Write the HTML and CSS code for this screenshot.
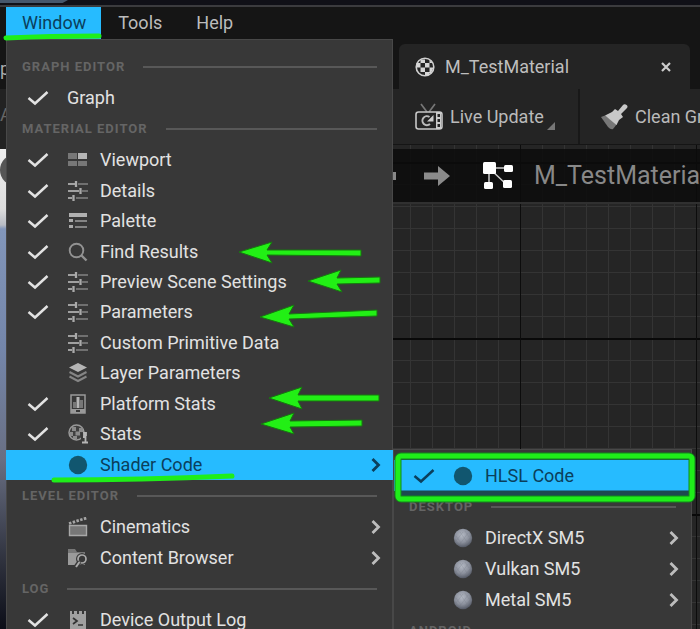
FILE: index.html
```
<!DOCTYPE html>
<html lang="en">
<head>
<meta charset="utf-8">
<title>Material Editor</title>
<link rel="stylesheet" href="styles.css">
</head>
<body>
<svg class="defs" aria-hidden="true">
  <defs>
    <radialGradient id="ball" cx="45%" cy="35%" r="65%">
      <stop offset="0" stop-color="#b4b9c4"/><stop offset=".6" stop-color="#8b909c"/><stop offset="1" stop-color="#555a66"/>
    </radialGradient>
    <symbol id="check" viewBox="0 0 22 16"><path d="M1.500 8L8 13.500L20.500 2" fill="none" stroke="currentColor" stroke-width="2.500"/></symbol>
    <symbol id="chevron" viewBox="0 0 12 16"><path d="M2.500 2L8.500 8L2.500 14" fill="none" stroke="currentColor" stroke-width="2.800"/></symbol>
    <symbol id="viewport" viewBox="0 0 20 20"><path d="M0 3h9v6H0zM0 11h9v5H0zM10 11h9v5h-9z" fill="#777"/><path d="M10 3h9v6h-9z" fill="#b5b5b5"/></symbol>
    <symbol id="sliders" viewBox="0 0 20 20"><path d="M0 3h7M0 10h11M0 17h4" stroke="#a0a0a0" stroke-width="2"/><path d="M10 3h10M14 10h6M8 17h12" stroke="#707070" stroke-width="2"/><path d="M8 0v6M12.500 7v6M5.500 14v6" stroke="#aaa" stroke-width="2.300"/></symbol>
    <symbol id="palette" viewBox="0 0 20 20"><path d="M1 2h18v4H1z" fill="#b0b0b0"/><path d="M1 8h4v3H1zM1 14h4v3H1z" fill="#aaa"/><path d="M7 9h12v2H7zM7 15h12v2H7z" fill="#858585"/></symbol>
    <symbol id="search" viewBox="0 0 20 20"><circle cx="8.500" cy="8.500" r="6.800" fill="none" stroke="#929292" stroke-width="1.900"/><path d="M13 13l5.500 5.500" stroke="#929292" stroke-width="2.400"/></symbol>
    <symbol id="layers" viewBox="0 0 20 20"><path d="M10 0l9 4.500-9 4.500-9-4.500z" fill="#b5b5b5"/><path d="M1.500 9l8.500 4.500 8.500-4.500M1.500 13.500L10 18l8.500-4.500" fill="none" stroke="#858585" stroke-width="2"/></symbol>
    <symbol id="platform" viewBox="0 0 20 20"><path d="M3 1h14v18H3z" fill="none" stroke="#999" stroke-width="1.500"/><path d="M3 15h14v4H3z" fill="#999"/><path d="M5 8h3v6H5zM12 6h3v8h-3z" fill="#777"/><path d="M8.500 3h3v11h-3z" fill="#b5b5b5"/><path d="M8 16h4v2H8z" fill="#383838"/></symbol>
    <symbol id="stats" viewBox="0 0 20 20"><circle cx="8.500" cy="8.500" r="7.500" fill="#404040" stroke="#999" stroke-width="1.500"/><path d="M4 3h4v4H4zM11 4h4v4h-4zM7.500 7.500H12v4H7.500zM2 8h3v4H2zM5 12h4v3H5z" fill="#8b8b8b"/><path d="M13 9h7v11h-7z" fill="#383838"/><path d="M16 9h2v2h-2zM15 13h2.500v5.500M14 18.500h6" fill="none" stroke="#b5b5b5" stroke-width="1.800"/></symbol>
    <symbol id="dot" viewBox="0 0 20 20"><circle cx="10" cy="10" r="9.200" fill="#11566f"/></symbol>
    <symbol id="sphere" viewBox="0 0 20 20"><circle cx="10" cy="10" r="9.200" fill="url(#ball)"/><path d="M3 8l5 7M7 4l7 10M12 3l4 6M3 13l7-9M7 16l8-11M12 16l5-6" stroke="#737883" stroke-width=".5" opacity=".5"/></symbol>
    <symbol id="clapper" viewBox="0 0 20 20"><path d="M1.500 8.500h17v10h-17z" fill="#777" stroke="#a8a8a8" stroke-width="1.400"/><path d="M1 6.500L18.500 1" stroke="#a5a5a5" stroke-width="2.800" stroke-dasharray="2.500 1.400"/></symbol>
    <symbol id="folder" viewBox="0 0 20 20"><path d="M0 1h7l2 3h8v3H0z" fill="#777"/><path d="M0 5h17v12H0z" fill="#9b9b9b"/><circle cx="14" cy="11" r="6" fill="#383838"/><circle cx="14" cy="11" r="4" fill="none" stroke="#aaa" stroke-width="1.700"/><path d="M11.500 13.500L7.500 19" stroke="#383838" stroke-width="4"/><path d="M11.500 14L8 19" stroke="#aaa" stroke-width="2"/></symbol>
    <symbol id="log" viewBox="0 0 20 20"><path d="M2 1h2v3h2V1h3v3h2V1h3v3h2V1h2v19H2z" fill="#a0a0a0"/><path d="M5 8l4 3-4 3M10 15h5" fill="none" stroke="#333" stroke-width="1.700"/></symbol>
  </defs>
</svg>

<div class="app">
  <div class="titlebar"><span class="titlebar-tab"></span></div>
  <nav class="menubar">
    <button class="menubar-item is-open" aria-expanded="true">Window</button>
    <button class="menubar-item">Tools</button>
    <button class="menubar-item">Help</button>
  </nav>

  <main class="workspace">
    <section class="preview">
      <div class="preview-tab">p</div>
      <div class="preview-tools">A</div>
      <div class="preview-view"><span class="preview-button"></span></div>
    </section>

    <section class="editor">
      <div class="tabs">
        <div class="tab">
          <svg class="tab-icon" viewBox="0 0 20 20"><circle cx="10" cy="10" r="8.800" fill="#252525" stroke="#d0d0d0" stroke-width="1.600"/><path d="M5.500 2.500H10V6H5.500zM10 6h4.500v4.500H10zM5.500 6v4.500H1.500V6zM5.500 10.500H10V15H5.500zM14.500 10.500h4L16 16h-1.500zM10 15h4.500v3H10zM14.500 3l3 3h-3z" fill="#d6d6d6"/></svg>
          <span>M_TestMaterial</span>
          <button class="tab-close" aria-label="Close tab"><svg viewBox="0 0 10 10"><path d="M1 1l8 8M9 1L1 9" stroke="currentColor" stroke-width="2.200"/></svg></button>
        </div>
      </div>
      <div class="toolbar">
        <button class="tool tool-live">
          <svg class="tool-icon" viewBox="0 0 28 28"><path d="M6 1l6 8M20 1l-6 8" stroke="#777" stroke-width="1.700"/><rect x="1" y="9" width="26" height="17" rx="2.500" fill="none" stroke="#c8c8c8" stroke-width="1.600"/><path d="M21 9h5v17h-5z" fill="#ccc"/><path d="M22.500 11h2.500v3h-2.500zM22.500 16h2.500v3h-2.500zM22.500 21h2.500v3h-2.500z" fill="#252525"/><path d="M14.500 14a4.500 4.500 0 1 0 .5 7" fill="none" stroke="#bbb" stroke-width="2"/><path d="M18.500 12v6.500H12z" fill="#ccc"/></svg>
          <span>Live Update</span>
          <svg class="tool-corner" viewBox="0 0 8 8"><path d="M8 0v8H0z" fill="#777"/></svg>
        </button>
        <button class="tool tool-clean">
          <svg class="tool-icon" viewBox="0 0 28 28"><path d="M1 14L5 12.500L17 21L13 26Q11 27 8 24Z" fill="#777"/><path d="M5 12.500L12 9l3-3 3 2 5-6c2-2 6 1 4 3l-6 6 2 3-4 3-2.500 5z" fill="#c8c8c8"/></svg>
          <span>Clean Graph</span>
        </button>
      </div>
      <div class="canvas">
        <div class="crumbs">
          <svg class="crumb-back" viewBox="0 0 3 8"><path d="M0 0h3v8H0z" fill="#888"/></svg>
          <svg class="crumb-next" viewBox="0 0 26 22"><path d="M0 7.500h14V1l12 10-12 10v-6.500H0z" fill="#8b8b8b"/></svg>
          <span class="crumb-rule"></span>
          <svg class="crumb-graph" viewBox="0 0 32 28"><path d="M7 6h20M7 6v18M7 6l18 17" stroke="#ccc" stroke-width="1.500"/><g fill="#fff"><rect x="1" width="13" height="12" rx="1.500"/><rect x="22" y="3" width="9" height="7" rx="1.500"/><rect x="2" y="20" width="9" height="7" rx="1.500"/><rect x="21" y="18" width="9" height="8" rx="1.500"/></g></svg>
          <span class="crumb-name">M_TestMaterial</span>
        </div>
      </div>
    </section>
  </main>

  <div class="menu menu-window" role="menu">
    <h2 class="group">Graph Editor</h2>
    <div class="items items-plain">
      <button class="item" role="menuitem"><svg class="check"><use href="#check"/></svg><span class="label">Graph</span></button>
    </div>
    <h2 class="group">Material Editor</h2>
    <div class="items items-material">
      <button class="item" role="menuitem"><svg class="check"><use href="#check"/></svg><svg class="icon"><use href="#viewport"/></svg><span class="label">Viewport</span></button>
      <button class="item" role="menuitem"><svg class="check"><use href="#check"/></svg><svg class="icon"><use href="#sliders"/></svg><span class="label">Details</span></button>
      <button class="item" role="menuitem"><svg class="check"><use href="#check"/></svg><svg class="icon"><use href="#palette"/></svg><span class="label">Palette</span></button>
      <button class="item" role="menuitem"><svg class="check"><use href="#check"/></svg><svg class="icon"><use href="#search"/></svg><span class="label">Find Results</span></button>
      <button class="item" role="menuitem"><svg class="check"><use href="#check"/></svg><svg class="icon"><use href="#sliders"/></svg><span class="label">Preview Scene Settings</span></button>
      <button class="item" role="menuitem"><svg class="check"><use href="#check"/></svg><svg class="icon"><use href="#sliders"/></svg><span class="label">Parameters</span></button>
      <button class="item" role="menuitem"><span class="check"></span><svg class="icon"><use href="#sliders"/></svg><span class="label">Custom Primitive Data</span></button>
      <button class="item" role="menuitem"><span class="check"></span><svg class="icon"><use href="#layers"/></svg><span class="label">Layer Parameters</span></button>
      <button class="item" role="menuitem"><svg class="check"><use href="#check"/></svg><svg class="icon"><use href="#platform"/></svg><span class="label">Platform Stats</span></button>
      <button class="item" role="menuitem"><svg class="check"><use href="#check"/></svg><svg class="icon"><use href="#stats"/></svg><span class="label">Stats</span></button>
      <button class="item is-active" role="menuitem"><span class="check"></span><svg class="icon"><use href="#dot"/></svg><span class="label">Shader Code</span><svg class="chevron"><use href="#chevron"/></svg></button>
    </div>
    <h2 class="group">Level Editor</h2>
    <div class="items">
      <button class="item" role="menuitem"><span class="check"></span><svg class="icon"><use href="#clapper"/></svg><span class="label">Cinematics</span><svg class="chevron"><use href="#chevron"/></svg></button>
      <button class="item" role="menuitem"><span class="check"></span><svg class="icon"><use href="#folder"/></svg><span class="label">Content Browser</span><svg class="chevron"><use href="#chevron"/></svg></button>
    </div>
    <h2 class="group">Log</h2>
    <div class="items">
      <button class="item" role="menuitem"><svg class="check"><use href="#check"/></svg><svg class="icon"><use href="#log"/></svg><span class="label">Device Output Log</span></button>
    </div>
  </div>

  <div class="menu menu-shader" role="menu">
    <div class="items">
      <button class="item is-active" role="menuitem"><svg class="check"><use href="#check"/></svg><svg class="icon"><use href="#dot"/></svg><span class="label">HLSL Code</span></button>
    </div>
    <h2 class="group">Desktop</h2>
    <div class="items">
      <button class="item" role="menuitem"><span class="check"></span><svg class="icon"><use href="#sphere"/></svg><span class="label">DirectX SM5</span><svg class="chevron"><use href="#chevron"/></svg></button>
      <button class="item" role="menuitem"><span class="check"></span><svg class="icon"><use href="#sphere"/></svg><span class="label">Vulkan SM5</span><svg class="chevron"><use href="#chevron"/></svg></button>
      <button class="item" role="menuitem"><span class="check"></span><svg class="icon"><use href="#sphere"/></svg><span class="label">Metal SM5</span><svg class="chevron"><use href="#chevron"/></svg></button>
    </div>
    <h2 class="group">Android</h2>
  </div>

  <svg class="marks" width="700" height="629" viewBox="0 0 700 629" aria-hidden="true">
    <path d="M401 490.500H689V496H401z" fill="#1d4a50"/>
    <path d="M401 459H689" stroke="#12576b" stroke-width="1.500"/>
    <g fill="none" stroke="#1fee1a" stroke-width="5" stroke-linecap="round" stroke-linejoin="round">
      <path d="M6 38Q50 36 99 36"/>
      <path d="M54 480Q140 480 232 476"/>
      <rect x="398" y="456" width="294" height="43" rx="3" stroke="#12891a" stroke-width="7"/>
      <rect x="398" y="456" width="294" height="43" rx="3"/>
    </g>
    <g fill="#22ef15" stroke="#16780f" stroke-width="1">
      <path d="M239 252L272 242L267 250L361 250V256L267 255L272 263Z"/>
      <path d="M308 281L341 270L337 278L380 277V283L337 284L342 292Z"/>
      <path d="M260 317L294 305L289 314L377 310V316L289 319L294 327Z"/>
      <path d="M269 398L302 387L298 395H379V401H298L302 409Z"/>
      <path d="M261 424L294 413L290 421L362 420V426L290 427L294 434Z"/>
    </g>
  </svg>
</div>
</body>
</html>
```
FILE: styles.css
```
* { box-sizing: border-box; }

body {
  margin: 0;
  background: #151515;
  color: #d8d8d8;
  font: 18px/24px Roboto, "Liberation Sans", sans-serif;
}

button {
  margin: 0;
  padding: 0;
  border: 0;
  background: none;
  color: inherit;
  font: inherit;
  text-align: left;
}

svg { display: block; flex: none; }
.defs { position: absolute; width: 0; height: 0; }

.app {
  position: relative;
  display: flex;
  flex-direction: column;
  height: 100vh;
  overflow: hidden;
}

/* Title bar and menu bar */
.titlebar {
  flex: none;
  height: 7px;
  background: #101017;
  border-bottom: 2px solid #3b3b3e;
}
.titlebar-tab {
  display: block;
  width: 68px;
  height: 3px;
  background: #46576b;
  clip-path: polygon(0 0, 100% 0, 92% 100%, 0 100%);
}
.menubar {
  display: flex;
  flex: none;
  height: 32px;
  padding-left: 6px;
}
.menubar-item { padding: 0 17px; color: #bcbcbc; }
.menubar-item.is-open { padding: 0 15px 0 16px; background: #26bbff; color: #0b3f5c; }

/* Docked panels */
.workspace {
  display: grid;
  grid-template-columns: 393px minmax(0, 1fr);
  flex: 1;
  min-height: 0;
}
.preview, .editor { display: flex; flex-direction: column; min-width: 0; }
.preview-tab { height: 50px; padding-top: 18px; color: #aaa; }
.preview-tools { height: 60px; padding-top: 14px; background: #222; color: #666; }
.preview-view {
  flex: 1;
  overflow: hidden;
  padding-top: 5px;
  background: linear-gradient(#eee 0, #ddd 60px, #b8bcc4 76px, #8296ba 80px, #7486aa 200px, #696f83 310px, #30333f 410px, #0c0e18 100%);
}
.preview-button { display: block; width: 32px; height: 32px; border-radius: 16px; background: #555; }

.tabs { height: 50px; padding: 5px 10px 0 6px; }
.tab {
  display: flex;
  align-items: center;
  gap: 10px;
  height: 45px;
  padding: 0 18px 0 16px;
  border-radius: 6px 6px 0 0;
  background: #242424;
  color: #bebebe;
}
.tab-icon { width: 20px; height: 20px; }
.tab-close { width: 12px; height: 10px; margin-left: auto; color: #ccc; }
.tab-close svg { width: 12px; height: 10px; }

.toolbar { display: flex; height: 55px; background: #242424; color: #bababa; }
.tool { display: flex; align-items: center; flex: none; gap: 7px; white-space: nowrap; }
.tool-icon { width: 28px; height: 28px; }
.tool-live { width: 187px; padding-left: 22px; border-right: 2px solid #181818; }
.tool-live .tool-corner { width: 8px; height: 8px; margin: 18px 0 0 -4px; }
.tool-clean { padding-left: 20px; }

.canvas {
  flex: 1;
  padding-top: 4px;
  border-top: 1px solid #151515;
  background-color: #252525;
  background-image:
    linear-gradient(90deg, #0c0c0c 1px, transparent 1px),
    linear-gradient(#090909 2px, transparent 2px),
    linear-gradient(90deg, #343434 1px, transparent 1px),
    linear-gradient(#343434 1px, transparent 1px);
  background-size: 176px 176px, 176px 176px, 22px 22px, 22px 22px;
  background-position: 127px 17px, 127px 17px, 127px 17px, 127px 17px;
}
.crumbs {
  display: flex;
  align-items: center;
  height: 55px;
  background: rgb(12 12 12 / 85%);
  border-bottom: 2px solid #303030;
  color: #888;
  font-size: 25px;
  overflow: hidden;
}
.crumb-back { width: 3px; height: 8px; }
.crumb-next { width: 26px; height: 22px; margin-left: 28px; }
.crumb-rule { width: 2px; height: 44px; margin-left: 16px; background: #1c1c1c; }
.crumb-graph { width: 32px; height: 28px; margin-left: 16px; }
.crumb-name { margin-left: 20px; }

/* Menus */
.menu {
  position: absolute;
  border: 1px solid #484848;
  background: #383838;
}
.menu-window { top: 39px; left: 6px; width: 387px; padding-top: 11px; }
.menu-shader { top: 449px; left: 393px; width: 299px; padding-top: 10px; }

.group {
  display: flex;
  align-items: center;
  gap: 18px;
  height: 31px;
  margin: 0;
  padding: 0 15px;
  color: #656565;
  font-size: 13px;
  font-weight: 700;
  letter-spacing: 1px;
  text-transform: uppercase;
}
.group::after { content: ""; flex: 1; height: 2px; background: #585858; }

.items { display: grid; grid-auto-rows: 31px; }
.items-material { grid-auto-rows: 1fr; height: 335px; margin-top: 1px; }
.item {
  display: flex;
  align-items: center;
  padding: 0 10px 0 20px;
  color: #e2e2e2;
}
.item.is-active { background: #26bbff; color: #0b3f5c; }
.menu-window .item.is-active { margin: 0 -1px; padding: 0 11px 0 21px; }
.menu-shader .item { padding: 0 11px 0 19px; }
.check { width: 22px; height: 16px; }
.icon { width: 20px; height: 20px; margin-left: 19px; }
.label { margin-left: 12px; white-space: nowrap; }
.menu-shader .icon { margin-left: 18px; }
.items-plain .label { margin-left: 18px; }
.chevron { width: 12px; height: 16px; margin-left: auto; color: #bdbdbd; }
.is-active .chevron { color: #0b3f5c; }

/* Highlighter strokes over the interface */
.marks { position: absolute; top: 0; left: 0; pointer-events: none; }
```
